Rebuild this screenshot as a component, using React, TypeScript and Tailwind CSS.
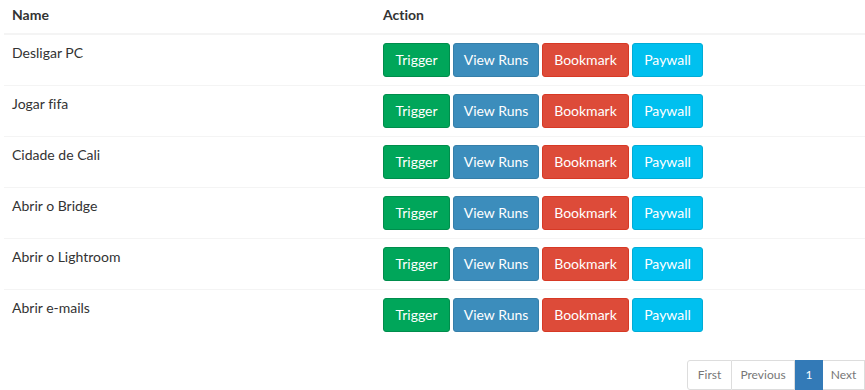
import React from "react";

const rows = ["Desligar PC", "Jogar fifa", "Cidade de Cali", "Abrir o Bridge", "Abrir o Lightroom", "Abrir e-mails"];

const btn = "inline-flex items-center justify-center h-[34px] px-0 rounded-[3px] border text-[14px] leading-[20px] text-white whitespace-nowrap";

export default function App() {
  return (
    <div className="w-[865px] h-[390px] overflow-hidden bg-white text-[#333] text-[14px] leading-[20px] [font-variant-ligatures:none]" style={{ fontFamily: "Lato, 'Open Sans', sans-serif" }}>
      <table className="ml-[4px] w-[861px] border-collapse">
        <thead>
          <tr className="border-b-2 border-[#f4f4f4]">
            <th className="w-[371px] text-left font-bold px-[8px] pt-[5px] pb-[8px]">Name</th>
            <th className="text-left font-bold px-[8px] pt-[5px] pb-[8px]">Action</th>
          </tr>
        </thead>
        <tbody>
          {rows.map((r, i) => (
            <tr key={r} className={i < rows.length - 1 ? "border-b border-[#f4f4f4]" : ""}>
              <td className="align-top px-[8px] pt-[8px] pb-[8px]">{r}</td>
              <td className="align-top px-[8px] py-[8px]">
                <div className="flex gap-[3px]">
                  <button className={`${btn} w-[67px] bg-[#00a65a] border-[#008d4c]`}>Trigger</button>
                  <button className={`${btn} w-[86px] bg-[#3c8dbc] border-[#367fa9]`}>View Runs</button>
                  <button className={`${btn} w-[87px] bg-[#dd4b39] border-[#d73925]`}>Bookmark</button>
                  <button className={`${btn} w-[71px] bg-[#00c0ef] border-[#00acd6]`}>Paywall</button>
                </div>
              </td>
            </tr>
          ))}
        </tbody>
      </table>
      <div className="flex justify-end mt-[20px]">
        <div className="flex text-[12px] leading-[18px] h-[30px]">
          <span className="w-[45px] flex items-center justify-center border border-[#ddd] rounded-l-[3px] text-[#777]">First</span>
          <span className="w-[63px] flex items-center justify-center border border-l-0 border-[#ddd] text-[#777]">Previous</span>
          <span className="w-[28px] flex items-center justify-center bg-[#337ab7] border border-[#337ab7] text-white">1</span>
          <span className="w-[42px] flex items-center justify-center border border-l-0 border-[#ddd] text-[#777]">Next</span>
        </div>
      </div>
    </div>
  );
}
